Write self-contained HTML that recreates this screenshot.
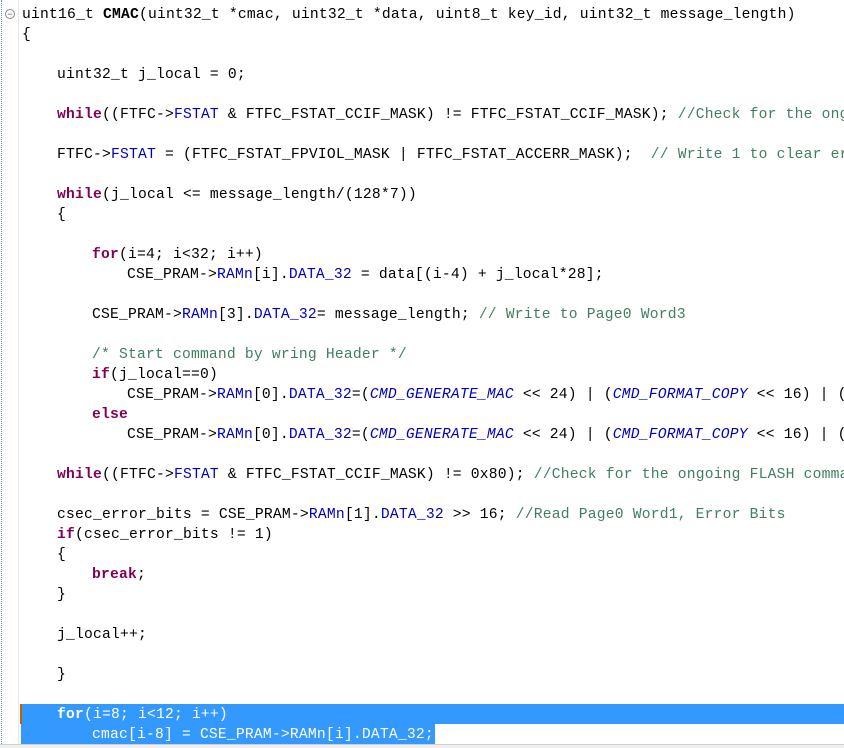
<!DOCTYPE html>
<html><head><style>
html,body{margin:0;padding:0;background:#fff;width:844px;height:748px;overflow:hidden;position:relative}
#wrap{position:absolute;left:0;top:0;width:844px;height:748px;overflow:hidden}
#code{position:absolute;left:22px;top:5px;font-family:"Liberation Mono",monospace;font-size:14.67px;letter-spacing:0.2px;tab-size:35px;-moz-tab-size:35px;line-height:20px;white-space:pre;color:#000;margin:0;z-index:2}
.k{color:#7F0055;font-weight:bold}
.f{color:#0000C0}
.m{color:#0000C0;font-style:italic}
.c{color:#3F7F5F}
.b{font-weight:bold}
.sel{color:#fff}
.sel .k{color:#fff}
#dots{position:absolute;left:1px;top:0;height:748px;border-left:1px dotted #5b8fd8}
#gut{position:absolute;left:18px;top:0;width:1px;height:748px;background:#e8e8e8}
.hl{position:absolute;background:#3399ff;z-index:1}
#mark{position:absolute;left:20px;top:704px;width:2px;height:20px;background:#c06000;z-index:3}
#fold{position:absolute;left:5px;top:9px;width:8px;height:8px;border:1px solid #8a8a8a;border-radius:50%;font:9px/8px "Liberation Sans",sans-serif;text-align:center;color:#555}
#bot{position:absolute;left:0;top:744px;width:844px;height:4px;background:#f0f0f0;border-top:1px solid #d0d0d0;z-index:4}
</style></head><body><div id="wrap">
<div id="dots"></div><div id="gut"></div>
<div id="fold">−</div>
<div class="hl" style="left:21px;top:704px;width:823px;height:20px"></div>
<div class="hl" style="left:21px;top:724px;width:414px;height:20px"></div>
<div id="mark"></div>
<pre id="code">uint16_t <span class="b">CMAC</span>(uint32_t *cmac, uint32_t *data, uint8_t key_id, uint32_t message_length)
{

	uint32_t j_local = 0;

	<span class="k">while</span>((FTFC-&gt;<span class="f">FSTAT</span> &amp; FTFC_FSTAT_CCIF_MASK) != FTFC_FSTAT_CCIF_MASK); <span class="c">//Check for the ongoing FLASH command</span>

	FTFC-&gt;<span class="f">FSTAT</span> = (FTFC_FSTAT_FPVIOL_MASK | FTFC_FSTAT_ACCERR_MASK);  <span class="c">// Write 1 to clear error flags</span>

	<span class="k">while</span>(j_local &lt;= message_length/(128*7))
	{

		<span class="k">for</span>(i=4; i&lt;32; i++)
			CSE_PRAM-&gt;<span class="f">RAMn</span>[i].<span class="f">DATA_32</span> = data[(i-4) + j_local*28];

		CSE_PRAM-&gt;<span class="f">RAMn</span>[3].<span class="f">DATA_32</span>= message_length; <span class="c">// Write to Page0 Word3</span>

		<span class="c">/* Start command by wring Header */</span>
		<span class="k">if</span>(j_local==0)
			CSE_PRAM-&gt;<span class="f">RAMn</span>[0].<span class="f">DATA_32</span>=(<span class="m">CMD_GENERATE_MAC</span> &lt;&lt; 24) | (<span class="m">CMD_FORMAT_COPY</span> &lt;&lt; 16) | (
		<span class="k">else</span>
			CSE_PRAM-&gt;<span class="f">RAMn</span>[0].<span class="f">DATA_32</span>=(<span class="m">CMD_GENERATE_MAC</span> &lt;&lt; 24) | (<span class="m">CMD_FORMAT_COPY</span> &lt;&lt; 16) | (

	<span class="k">while</span>((FTFC-&gt;<span class="f">FSTAT</span> &amp; FTFC_FSTAT_CCIF_MASK) != 0x80); <span class="c">//Check for the ongoing FLASH command</span>

	csec_error_bits = CSE_PRAM-&gt;<span class="f">RAMn</span>[1].<span class="f">DATA_32</span> &gt;&gt; 16; <span class="c">//Read Page0 Word1, Error Bits</span>
	<span class="k">if</span>(csec_error_bits != 1)
	{
		<span class="k">break</span>;
	}

	j_local++;

	}

<span class="sel">	<span class="k">for</span>(i=8; i&lt;12; i++)
		cmac[i-8] = CSE_PRAM-&gt;RAMn[i].DATA_32;</span></pre>
<div id="bot"></div>
</div></body></html>
